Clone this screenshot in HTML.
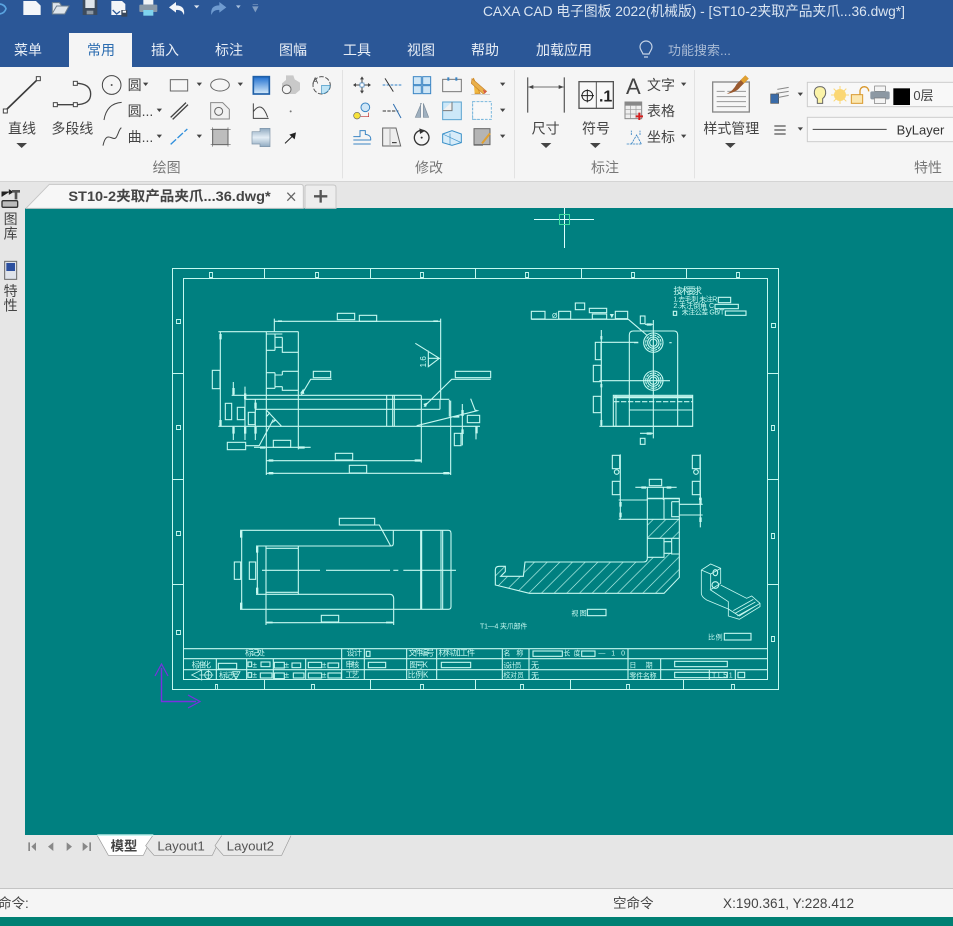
<!DOCTYPE html>
<html lang="zh"><head><meta charset="utf-8"><title>CAXA CAD 电子图板 2022</title>
<style>
html,body{margin:0;padding:0;width:953px;height:926px;overflow:hidden;background:#e6e6e6}
svg{display:block;position:absolute;left:0;top:0}
text{font-family:"Liberation Sans","Noto Sans CJK SC",sans-serif}
.d{fill:none;stroke:#c6f8f0;stroke-width:3.300}
.f{fill:#c6f8f0;stroke:none}
.t{fill:#c6f8f0;font-size:21px}
.k{fill:#444;font-size:42px}
.g{fill:#777;font-size:42px}
.tri{fill:#444}
.ic{fill:none;stroke:#444;stroke-width:3}
</style></head><body>
<svg width="953" height="926" viewBox="0 0 953 926" xmlns="http://www.w3.org/2000/svg">
<defs>
<pattern id="h" patternUnits="userSpaceOnUse" width="38" height="38"><path d="M-2 40L40 -2M-2 2L2 -2M36 40L40 36" stroke="#bdf5ec" stroke-width="2"/></pattern>
<linearGradient id="bl" x1="0" y1="0" x2="0" y2="1"><stop offset="0" stop-color="#1f6fd0"/><stop offset="1" stop-color="#d8ecfb"/></linearGradient>
<linearGradient id="cy" x1="0" y1="0" x2="0" y2="1"><stop offset="0" stop-color="#8fa9c0"/><stop offset=".5" stop-color="#e4eef6"/><stop offset="1" stop-color="#8fa9c0"/></linearGradient>
</defs>
<!-- base regions -->
<rect width="953" height="926" fill="#e6e6e6"/>
<rect width="953" height="67" fill="#2b5797"/>
<rect y="67" width="953" height="114" fill="#f5f5f5"/>
<rect y="181" width="953" height="1" fill="#d4d4d4"/>
<rect x="25" y="208" width="928" height="627" fill="#008080"/>
<rect y="888" width="953" height="1" fill="#c4c4c4"/>
<rect y="889" width="953" height="28" fill="#f5f5f5"/>
<rect y="917" width="953" height="9" fill="#008073"/>
<rect x="69" y="33" width="63" height="34" fill="#f5f5f5"/>

<!-- title + tabs -->
<text x="483" y="16" font-size="14" fill="#dbe5f1" textLength="422" lengthAdjust="spacingAndGlyphs">CAXA CAD 电子图板 2022(机械版) - [ST10-2夹取产品夹爪...36.dwg*]</text>
<g font-size="14" fill="#e8eef6">
<text x="14" y="55">菜单</text><text x="87" y="55" fill="#2b6cb0">常用</text><text x="151" y="55">插入</text><text x="215" y="55">标注</text><text x="279" y="55">图幅</text><text x="343" y="55">工具</text><text x="407" y="55">视图</text><text x="471" y="55">帮助</text><text x="536" y="55">加载应用</text>
<text x="668" y="55" font-size="13" fill="#a9bbd5">功能搜索...</text></g>
<g fill="none" stroke="#c5d3e6" stroke-width="1.200"><path d="M643 54c-1-3-3-4-3-7a6 6 0 0 1 12 0c0 3-2 4-3 7zM644 57h4"/></g>

<!-- quick access toolbar -->
<g transform="scale(.33333)">
<path d="M0 12q14 2 18 14q-4 14-20 16" fill="none" stroke="#5aa4e0" stroke-width="5"/>
<path d="M70 3H108L122 17V45H70Z" fill="#f4f6f9"/>
<path d="M157 40L170 18H207L194 42H157ZM157 40V8H178L184 16" fill="#dfe6ec" stroke="#6e7f8e" stroke-width="3"/>
<path d="M248 0H292V45H248Z" fill="#3d4b5c"/><rect x="256" y="0" width="28" height="24" fill="#dfe5ea"/><rect x="260" y="32" width="20" height="11" fill="#8e99a4"/>
<path d="M334 3H366L376 12V45H334Z" fill="#f3f5f8"/><path d="M338 30L350 42L360 34" stroke="#2b5797" stroke-width="4" fill="none"/><rect x="364" y="30" width="18" height="20" fill="#39475a"/><rect x="368" y="32" width="10" height="6" fill="#fff"/>
<rect x="430" y="0" width="30" height="14" fill="#f2f4f7"/><rect x="418" y="14" width="54" height="22" rx="3" fill="#8a99a8"/><rect x="430" y="30" width="30" height="17" fill="#7fd3ee"/>
<path d="M507 22L528 6V16Q556 16 552 45Q546 28 528 30V38Z" fill="#f2f5f9"/>
<path d="M679 22L658 6V16Q630 16 634 45Q640 28 658 30V38Z" fill="#6f9bd0"/>
<path d="M582 16H598L590 25Z" fill="#dfe6ee"/><path d="M708 16H722L715 25Z" fill="#a9c0dd"/>
<path d="M758 13H774M758 20H774L766 35Z" fill="#7f9cc2" stroke="#7f9cc2" stroke-width="2"/>
</g>

<!-- ribbon left -->
<g transform="scale(.33333)">
<path d="M15 333L115 236" stroke="#3a3a3a" stroke-width="5" fill="none"/>
<rect x="10" y="327" width="12" height="12" fill="#fff" stroke="#444" stroke-width="3"/><rect x="109" y="230" width="12" height="12" fill="#fff" stroke="#444" stroke-width="3"/>
<text class="k" x="24" y="400">直线</text><path class="tri" d="M49 429H81L65 444Z"/>
<path d="M166 314H226M226 250Q272 250 272 282Q272 314 226 314" fill="none" stroke="#444" stroke-width="4"/>
<g fill="#fff" stroke="#444" stroke-width="3"><rect x="220" y="244" width="12" height="12"/><rect x="160" y="308" width="12" height="12"/><rect x="220" y="308" width="12" height="12"/></g>
<text class="k" x="154" y="400">多段线</text>
<circle class="ic" cx="335" cy="255" r="28" stroke="#666"/><circle cx="335" cy="255" r="3" fill="#555"/>
<text class="k" x="383" y="270">圆</text><path class="tri" d="M429 248H445L437 258Z"/>
<path class="ic" d="M312 360Q320 310 365 307"/><text class="k" x="383" y="348">圆...</text><path class="tri" d="M470 326H486L478 336Z"/>
<path class="ic" d="M309 437C320 385 340 430 350 410S355 392 364 383"/><text class="k" x="383" y="426">曲...</text><path class="tri" d="M470 404H486L478 414Z"/>
<rect x="511" y="239" width="52" height="34" fill="none" stroke="#666" stroke-width="3"/><path class="tri" d="M590 248H606L598 258Z"/>
<ellipse cx="660" cy="255" rx="28" ry="18" fill="none" stroke="#666" stroke-width="3"/><path class="tri" d="M713 248H729L721 258Z"/>
<rect x="760" y="230" width="48" height="52" fill="url(#bl)" stroke="#1f5fa8" stroke-width="5"/>
<path d="M858 226H880L884 238L900 248V270L886 282H860L846 272V250L858 240Z" fill="#c9c9c9"/><circle cx="860" cy="268" r="13" fill="#f4f4f4" stroke="#666" stroke-width="3"/>
<circle cx="965" cy="256" r="26" fill="none" stroke="#555" stroke-width="3" stroke-dasharray="14 5"/><path d="M965 256H990A25 25 0 0 1 965 281Z" fill="#bfe4f5" stroke="#3a8fc0" stroke-width="2"/><text x="937" y="250" font-size="26" fill="#444">A</text>
<path d="M512 352L558 308M518 358L564 314" stroke="#444" stroke-width="4" fill="none"/>
<path d="M632 308H668L688 328V357H632Z" fill="#f0f0f0" stroke="#888" stroke-width="3"/><circle cx="656" cy="334" r="12" fill="none" stroke="#666" stroke-width="3"/>
<path class="ic" d="M760 310V355H806M760 335Q785 300 803 352"/>
<circle cx="872" cy="334" r="3" fill="#777"/>
<path d="M512 433L562 387" stroke="#2f8fdc" stroke-width="4" fill="none" stroke-dasharray="22 6"/><path class="tri" d="M590 404H606L598 414Z"/>
<rect x="638" y="388" width="46" height="46" fill="#bdbdbd" stroke="#666" stroke-width="3"/><path d="M632 388H692M632 434H692M638 382V440M684 382V440" stroke="#666" stroke-width="2"/>
<path d="M756 395H780V385H810V440H780V432H756Z" fill="url(#cy)" stroke="#7d93a6" stroke-width="2"/>
<path d="M855 430L878 408" stroke="#222" stroke-width="3"/><path d="M888 397L884 418L868 404Z" fill="#222"/>
<text class="g" x="458" y="518">绘图</text><text class="g" x="1245" y="518">修改</text>
<rect x="1027" y="210" width="2" height="325" fill="#d8d8d8"/>
<!-- modify -->
<path d="M1062 255H1110M1086 232V278" stroke="#444" stroke-width="3"/><rect x="1080" y="249" width="12" height="12" fill="#fff" stroke="#3a80c0" stroke-width="2"/><path class="tri" d="M1086 229L1080 238H1092ZM1086 281L1080 272H1092ZM1059 255L1068 249V261ZM1113 255L1104 249V261Z"/>
<path d="M1148 255H1205" stroke="#2f7fc8" stroke-width="3" stroke-dasharray="8 4"/><path d="M1155 235L1180 275" stroke="#333" stroke-width="3"/>
<g fill="#cfe6f6" stroke="#3a85c4" stroke-width="3"><rect x="1240" y="230" width="24" height="24"/><rect x="1268" y="230" width="24" height="24"/><rect x="1240" y="257" width="24" height="24"/><rect x="1268" y="257" width="24" height="24"/></g>
<rect x="1328" y="238" width="56" height="37" fill="none" stroke="#777" stroke-width="3"/><rect x="1342" y="232" width="6" height="10" fill="#3a85c4"/><rect x="1366" y="232" width="6" height="10" fill="#3a85c4"/>
<path d="M1420 234L1440 280H1424" fill="#f0b840" stroke="#d69020" stroke-width="3"/>
<circle cx="1071" cy="347" r="10" fill="#f7e23a" stroke="#666" stroke-width="2"/><circle cx="1096" cy="322" r="13" fill="#cfe6f6" stroke="#3a85c4" stroke-width="3"/><path d="M1082 350H1106V338" fill="none" stroke="#c03030" stroke-width="2"/>
<path d="M1148 333H1195" stroke="#333" stroke-width="3" stroke-dasharray="10 4"/><path d="M1180 312L1203 354" stroke="#2f6fb0" stroke-width="3"/>
<path d="M1264 310L1246 352H1262V310ZM1270 310L1286 352H1270Z" fill="#9fb0bf" stroke="#7d8d9c" stroke-width="2"/>
<rect x="1328" y="306" width="56" height="53" fill="#cde8f8" stroke="#5aa3d0" stroke-width="3"/><path d="M1328 332H1356V306" stroke="#777" stroke-width="3" fill="#f1f1f1"/>
<rect x="1418" y="306" width="30" height="52" fill="none" stroke="#5aa3d0" stroke-width="3" stroke-dasharray="6 4"/>
<path d="M1060 420H1112Q1114 405 1096 403V392H1080V410H1060M1060 432H1112" fill="none" stroke="#3a85c4" stroke-width="3"/>
<path d="M1148 384H1188L1202 438H1148Z" fill="#eee" stroke="#666" stroke-width="3"/><path d="M1170 384V438" stroke="#aaa" stroke-width="3"/><path d="M1176 428H1190" stroke="#222" stroke-width="3"/>
<circle cx="1265" cy="413" r="22" fill="none" stroke="#333" stroke-width="4"/><circle cx="1265" cy="413" r="3" fill="#333"/><path d="M1258 385L1276 392L1260 402Z" fill="#333"/>
<path d="M1328 402L1356 392L1384 402V428L1356 436L1328 428Z" fill="#d7ecf9" stroke="#3a90c8" stroke-width="3"/><path d="M1350 400V434M1328 402L1384 428" stroke="#3a90c8" stroke-width="2"/>
<rect x="1422" y="388" width="26" height="48" fill="#bbb" stroke="#666" stroke-width="2"/>
</g>

<!-- ribbon right -->
<g transform="translate(470 0) scale(.33333)">
<path d="M6 236L50 274L40 282L4 250Z" fill="#e9b04a" stroke="#c9822a" stroke-width="2"/><path d="M38 268L50 274L44 282Z" fill="#d65a4a"/><path d="M4 283H60" stroke="#bbb" stroke-width="2"/>
<path class="tri" d="M90 248H106L98 258Z"/>
<rect x="8" y="305" width="56" height="53" fill="#f8f8f8" stroke="#7ab8dd" stroke-width="3" stroke-dasharray="8 4"/><path class="tri" d="M90 326H106L98 336Z"/>
<rect x="12" y="386" width="48" height="48" fill="#b4b4b4" stroke="#666" stroke-width="3"/><path d="M36 430L60 400" stroke="#e0a030" stroke-width="6"/><path class="tri" d="M90 404H106L98 414Z"/>
<rect x="133" y="210" width="2" height="325" fill="#d8d8d8"/>
<rect x="673" y="210" width="2" height="325" fill="#d8d8d8"/>
<path d="M173 232V338M283 232V338" stroke="#666" stroke-width="4"/><path d="M175 261H281" stroke="#444" stroke-width="2"/><path class="tri" d="M175 261L190 255V267ZM281 261L266 255V267Z"/>
<text class="k" x="185" y="400">尺寸</text><path class="tri" d="M212 429H244L228 444Z"/>
<rect x="327" y="245" width="103" height="80" fill="#f8f8f8" stroke="#555" stroke-width="4"/><path d="M379 245V325" stroke="#555" stroke-width="3"/>
<circle cx="352" cy="287" r="16" fill="none" stroke="#222" stroke-width="3"/><path d="M333 287H372M352 268V307" stroke="#222" stroke-width="3"/>
<text x="387" y="305" font-size="48" font-weight="700" fill="#222">.1</text>
<text class="k" x="336" y="400">符号</text><path class="tri" d="M360 429H392L376 444Z"/>
<text x="468" y="282" font-size="66" fill="#444">A</text>
<text class="k" x="531" y="270">文字</text><path class="tri" d="M633 248H649L641 258Z"/>
<rect x="465" y="306" width="50" height="50" fill="#eee" stroke="#888" stroke-width="3"/><rect x="465" y="306" width="50" height="11" fill="#888"/><path d="M465 329H515M465 342H515M482 317V356M498 317V356" stroke="#999" stroke-width="2"/><path d="M508 338V360M497 349H519" stroke="#d32020" stroke-width="6"/>
<text class="k" x="531" y="348">表格</text>
<path d="M470 432H516M484 432L500 405L514 432M484 405V392M510 405V392" fill="none" stroke="#3a85c4" stroke-width="2.500" stroke-dasharray="7 2"/>
<text class="k" x="531" y="426">坐标</text><path class="tri" d="M633 404H649L641 414Z"/>
<text class="g" x="363" y="518">标注</text><text class="g" x="1332" y="518">特性</text>
<rect x="728" y="246" width="110" height="90" fill="#f6f6f6" stroke="#888" stroke-width="4"/>
<path d="M740 274H764M740 290H828M740 305H828M740 320H828M772 274H828" stroke="#999" stroke-width="3"/>
<path d="M770 282Q790 272 800 252L826 226L836 236L810 262Q800 276 770 282Z" fill="#9a5a30"/><path d="M812 240L826 226L836 236L822 250Z" fill="#e0a030"/>
<text class="k" x="700" y="400">样式管理</text><path class="tri" d="M765 429H797L781 444Z"/>
<rect x="902" y="282" width="24" height="28" fill="#3a6ba8" stroke="#555" stroke-width="2"/><path d="M922 268L956 262M918 280L956 274M926 292L956 286" stroke="#888" stroke-width="3"/>
<path class="tri" d="M983 278H999L991 288Z"/><path d="M913 378H947M913 390H947M913 402H947" stroke="#555" stroke-width="4"/><path class="tri" d="M983 382H999L991 392Z"/>
<rect x="1012" y="247" width="440" height="73" fill="#f8f8f8" stroke="#ccc" stroke-width="3"/>
<rect x="1012" y="352" width="440" height="73" fill="#f8f8f8" stroke="#ccc" stroke-width="3"/>
<path d="M1050 260C1030 260 1028 284 1042 296V310H1058V296C1072 284 1070 260 1050 260Z" fill="#fbf3a8" stroke="#666" stroke-width="3"/>
<circle cx="1110" cy="285" r="18" fill="#fbd774"/><path d="M1110 258V312M1083 285H1137M1091 266L1129 304M1129 266L1091 304" stroke="#fbd774" stroke-width="3"/>
<rect x="1144" y="284" width="34" height="26" fill="#fbe7b0" stroke="#d9992e" stroke-width="3"/><path d="M1170 284V272Q1172 260 1184 260Q1196 262 1196 274" fill="none" stroke="#d9992e" stroke-width="4"/>
<rect x="1214" y="258" width="32" height="16" fill="#f4f4f4" stroke="#777" stroke-width="2"/><rect x="1201" y="274" width="58" height="24" rx="5" fill="#8c98a3"/><rect x="1213" y="294" width="34" height="16" fill="#f4f4f4" stroke="#777" stroke-width="2"/>
<rect x="1270" y="265" width="50" height="50" fill="#000"/>
<text x="1330" y="300" fill="#444" style="font-size:39px">0层</text>
<path d="M1028 388H1250" stroke="#444" stroke-width="3"/>
<text x="1280" y="404" font-size="39" fill="#333">ByLayer</text>
</g>

<!-- document tabs -->
<g transform="scale(.33333)">
<path d="M78 625L148 553H902Q910 553 910 561V625Z" fill="#f7f7f7" stroke="#c6c6c6" stroke-width="3"/>
<path d="M915 625V561Q915 555 922 555H1000Q1008 555 1008 563V625Z" fill="#ededed" stroke="#c6c6c6" stroke-width="3"/>
<text x="205" y="603" font-size="42" font-weight="700" fill="#444" textLength="607" lengthAdjust="spacingAndGlyphs">ST10-2夹取产品夹爪...36.dwg*</text>
<path d="M862 578L885 602M885 578L862 602" stroke="#666" stroke-width="4"/>
<path d="M962 570V608M942 589H982" stroke="#555" stroke-width="7"/>
</g>

<!-- left sidebar -->
<g transform="translate(0 180) scale(.33333)">
<path d="M6 50V36H28M28 30L38 36L28 42Z" fill="#222" stroke="#222" stroke-width="3"/>
<path d="M36 30H60V38H52V58H44V38H36Z" fill="#555"/>
<rect x="6" y="62" width="47" height="20" rx="4" fill="#bbb" stroke="#333" stroke-width="4"/>
<rect x="14" y="244" width="36" height="54" fill="#dfe3ea" stroke="#666" stroke-width="3"/><rect x="19" y="249" width="26" height="24" fill="#2c4f9e"/>
<text x="11" y="132" font-size="42" fill="#444">图</text><text x="11" y="176" font-size="42" fill="#444">库</text>
<text x="11" y="348" font-size="42" fill="#444">特</text><text x="11" y="392" font-size="42" fill="#444">性</text>
</g>

<!-- crosshair + UCS -->
<path d="M534 219.500H594M564.500 208V248" stroke="#dff" stroke-width="1" fill="none"/>
<rect x="559.500" y="214.500" width="10" height="10" fill="none" stroke="#3fe0a0"/>
<path d="M161.500 668V701.500H196" stroke="#7a30e0" stroke-width="1.400" fill="none"/>
<path d="M155 676L161.500 664L168 676M188 695L200 701.500L188 708" stroke="#7a30e0" stroke-width="1.200" fill="none"/>

<!-- frame -->
<g fill="none" stroke="#c6f8f0" stroke-width="1">
<rect x="172.500" y="268.500" width="606" height="421"/>
<rect x="183.500" y="278.500" width="584" height="401"/>
<path d="M264.500 268V278M370.500 268V278M475.500 268V278M581.500 268V278M686.500 268V278M173 373.500H183M173 479.500H183M173 584.500H183M768 373.500H778M768 479.500H778M768 584.500H778M264.500 680V690M370.500 680V690M475.500 680V690M570.500 680V690M683.500 680V690"/>
<path stroke-width=".9" d="M209.500 272.500h3v5h-3zM315.500 272.500h3v5h-3zM420.500 272.500h3v5h-3zM525.500 272.500h3v5h-3zM631.500 272.500h3v5h-3zM736.500 272.500h3v5h-3zM176.500 319.500h4v4h-4zM176.500 425.500h4v4h-4zM176.500 531.500h4v4h-4zM176.500 630.500h4v4h-4zM771.500 323.500h4v4h-4zM771.500 425.500h3v5h-3zM771.500 533.500h3v5h-3zM771.500 636.500h3v5h-3zM215.500 684.500h2v5h-2zM311.500 684.500h3v5h-3zM420.500 684.500h3v5h-3zM520.500 684.500h3v5h-3zM626.500 684.500h3v5h-3zM731.500 684.500h3v5h-3z"/>
</g>

<!-- front view -->
<g transform="translate(160 260) scale(.33333)">
<path class="d" d="M343 176V215M343 184H842M842 176V420M175 215H415M181 215V499M175 499H960M319 215V645M415 215V568M319 222H367M319 271H345M345 232H367M367 232V277H415M345 262H367M319 338H345M367 334H415M367 334V345M345 345H367M345 380H367M367 380V391H415M319 385H345M345 338V385M345 222V271M215 406H784M784 406V608M255 418H868M286 448H840M840 420V448M868 420V470M872 422V645M680 406V499M698 406V499M703 406V499M220 366V406M220 499V540M255 380V540M286 418V540M319 450L365 499M297 558L340 478M257 557H297M282 562H452M319 602H784M319 640H872M766 250L838 295H805M805 272V320L838 295M792 440L875 358H992M424 405L452 358H515M770 497L952 452L945 450L932 416M907 432V556M948 500V538M330 458L319 470"/>
<g class="d"><rect x="532" y="160" width="52" height="19"/><rect x="598" y="166" width="52" height="18"/><rect x="157" y="331" width="23" height="55"/><rect x="196" y="430" width="19" height="49"/><rect x="232" y="442" width="22" height="37"/><rect x="265" y="457" width="20" height="37"/><rect x="202" y="547" width="55" height="22"/><rect x="340" y="541" width="52" height="21"/><rect x="526" y="580" width="52" height="20"/><rect x="568" y="616" width="52" height="23"/><rect x="886" y="334" width="106" height="19"/><rect x="460" y="334" width="52" height="19"/><rect x="922" y="466" width="37" height="22"/><rect x="883" y="520" width="20" height="37"/></g>
<path class="f" d="M178 222h7v16h-7zM178 480h7v18h-7zM217 384h7v20h-7zM217 501h7v20h-7zM252 400h7v18h-7zM252 501h7v20h-7zM283 428h7v18h-7zM283 501h7v20h-7zM354 181h12v5h-12zM820 181h14v5h-14zM300 559h16v7h-16zM416 559h18v7h-18zM326 598h14v7h-14zM764 598h18v7h-18zM326 636h14v7h-14zM850 636h18v7h-18zM904 450h7v18h-7zM904 508h7v14h-7zM946 500h7v20h-7zM880 468h18v5h-18zM790 432l12 -4l-4 14zM420 400l10 -14l3 16zM335 490l10 -14l3 6z"/>
<text class="t" transform="translate(798 322) rotate(-90)" style="font-size:24px">1.6</text>
</g>

<!-- right top view -->
<g transform="translate(480 260) scale(.33333)">
<path class="d" d="M154 178H445L500 225M495 193H520M520 180V535M480 520H520M448 406V225Q448 213 460 213H582Q593 213 593 225V406M462 248H475M568 248H575M358 362H570M364 210V499M364 247H475M358 499H638M408 406V499M402 410H638M402 413H638M448 450H638M448 406V499M593 406V499M421 583V720M661 583V720M466 682H590M502 682V720M550 682V720M502 716H598"/>
<path class="d" d="M402 425H638" stroke-dasharray="16 5"/>
<g class="d"><rect x="154" y="154" width="41" height="23"/><rect x="236" y="154" width="36" height="23"/><rect x="286" y="129" width="28" height="20"/><rect x="328" y="145" width="52" height="13"/><rect x="337" y="162" width="43" height="15"/><rect x="406" y="154" width="37" height="22"/><rect x="481" y="168" width="14" height="23"/><rect x="481" y="535" width="14" height="18"/><rect x="346" y="247" width="17" height="52"/><rect x="340" y="316" width="23" height="49"/><rect x="340" y="409" width="23" height="49"/><rect x="400" y="406" width="238" height="93"/>
<circle cx="520" cy="248" r="29"/><circle cx="520" cy="248" r="23" stroke-dasharray="9 3"/><circle cx="520" cy="248" r="17"/><circle cx="520" cy="248" r="11"/>
<circle cx="520" cy="362" r="29"/><circle cx="520" cy="362" r="23" stroke-dasharray="9 3"/><circle cx="520" cy="362" r="17"/><circle cx="520" cy="362" r="11"/>
<rect x="397" y="586" width="22" height="40"/><rect x="637" y="586" width="23" height="40"/><rect x="397" y="664" width="23" height="40"/><rect x="637" y="664" width="23" height="40"/><circle cx="410" cy="636" r="7"/><circle cx="648" cy="636" r="7"/><rect x="508" y="658" width="37" height="19"/>
<rect x="715" y="112" width="37" height="16"/><rect x="705" y="133" width="70" height="13"/><rect x="736" y="153" width="62" height="13"/><rect x="580" y="154" width="10" height="12"/></g>
<path class="f" d="M361 228h6v10h-6zM361 372h6v10h-6zM361 480h6v16h-6zM500 190h15v7h-15zM500 517h15v7h-15zM484 679h14v7h-14zM560 679h14v7h-14zM657 713h8v7h-8z"/>
<text x="580" y="102" fill="#c6f8f0" style="font-size:27px" textLength="86">技术要求</text>
<text x="580" y="124" class="t" textLength="132">1.去毛刺 未注R</text>
<text x="580" y="144" class="t" textLength="122">2.未注倒角 C</text>
<text x="605" y="163" class="t" textLength="128">未注公差 GB/T</text>
<text x="216" y="174" class="t">Ø</text><text x="385" y="174" class="t">▼</text>
</g>

<!-- section view -->
<g transform="translate(480 490) scale(.33333)">
<path d="M46 285V240Q46 229 58 229H76V245L62 259H130L135 216H490Q502 216 502 205V88H598V262L552 310H148Z" fill="url(#h)"/>
<rect x="503" y="146" width="49" height="56" fill="#008080"/>
<rect x="552" y="146" width="46" height="44" fill="#008080"/>
<path class="d" d="M502 25V205Q502 216 490 216H135L130 259H62L76 245V229H58Q46 229 46 240V285L148 310H552L598 262V25H502M502 88H598M502 145H598M552 25V88M552 145V202H502M552 155H575M575 35H598M575 35V80H598M575 145V192H598M552 190H575M575 145V192M416 30H502M416 88H502M421 30V88M598 43H668M598 75H668M661 0V112"/>
<path class="f" d="M418 36h7v14h-7zM418 68h7v14h-7zM658 26h7v16h-7zM658 82h7v14h-7z"/>
<path class="d" style="stroke-width:2.500" d="M664 240L692 222L722 235V280M664 240V310Q664 320 680 330L745 357V378L778 388L840 350V340L815 318L800 325L722 285M664 240L692 252L722 235M692 252V300L745 335V357M745 357L778 378L840 340M760 362L820 328M765 370L826 336M772 378L834 344M690 300L722 280"/>
<ellipse class="d" cx="706" cy="248" rx="7" ry="9"/><ellipse class="d" cx="706" cy="285" rx="10" ry="10"/>
<rect class="d" x="322" y="358" width="56" height="19"/><rect class="d" x="733" y="430" width="80" height="20"/>
<text class="t" x="274" y="376" textLength="46">视图</text><text class="t" x="684" y="448" textLength="44">比例</text>
<text class="t" x="0" y="416" textLength="142">T1—4 夹爪部件</text>
</g>

<!-- plan view + title block left -->
<g transform="translate(150 490) scale(.33333)">
<path class="d" d="M270 121H895Q903 121 903 130V350Q903 358 895 358H270M275 121V358M318 168H722Q730 168 730 160V121M318 313H720Q730 313 731 325V358M348 168V405M445 168V313M348 175H445M348 307H445M322 168V313M812 121V358M815 121V358M873 121V358M878 121V358M336 241H510M528 241H720M730 241H745M760 241H918M568 105H688L722 168M348 398H731M731 358V405"/>
<g class="d"><rect x="568" y="85" width="106" height="20"/><rect x="253" y="216" width="19" height="52"/><rect x="298" y="216" width="19" height="52"/><rect x="514" y="376" width="52" height="20"/></g>
<path class="f" d="M270 123h7v20h-7zM270 338h7v20h-7zM318 170h7v18h-7zM318 293h7v18h-7zM350 395h18v5h-18zM708 395h20v5h-20z"/>
<path class="d" d="M100 476H1852M100 506H1852M100 539H1852M199 506V570M290 506V570M370 506V570M467 506V570M575 476V570M643 476V570M770 476V570M860 476V570M1057 476V570M1137 476V570M1434 476V570M1532 506V570M1678 539V570M1756 539V570"/>
<g class="d"><rect x="205" y="520" width="55" height="17"/><rect x="294" y="516" width="11" height="14"/><rect x="333" y="516" width="27" height="14"/><rect x="373" y="517" width="30" height="17"/><rect x="426" y="519" width="26" height="14"/><rect x="475" y="517" width="40" height="16"/><rect x="534" y="519" width="32" height="14"/><rect x="294" y="548" width="11" height="14"/><rect x="331" y="549" width="35" height="15"/><rect x="373" y="549" width="30" height="17"/><rect x="430" y="549" width="32" height="15"/><rect x="475" y="549" width="40" height="15"/><rect x="534" y="549" width="40" height="15"/><rect x="649" y="484" width="11" height="15"/><rect x="655" y="517" width="52" height="16"/><rect x="874" y="517" width="88" height="16"/>
<rect x="1149" y="483" width="88" height="16"/><rect x="1295" y="483" width="40" height="16"/>
<rect x="1574" y="514" width="158" height="16"/><rect x="1574" y="547" width="158" height="16"/><rect x="1764" y="547" width="20" height="16"/></g>
<g class="t" style="font-size:24px">
<text x="285" y="497" textLength="60">标记处</text><text x="590" y="497" textLength="46">设 计</text>
<text x="125" y="532" textLength="58">标准化</text><text x="207" y="564" textLength="60">标记号</text>
<text x="308" y="532">±</text><text x="308" y="563">±</text><text x="404" y="532">±</text><text x="404" y="563">±</text><text x="516" y="532">±</text><text x="516" y="563">±</text>
<text x="586" y="532" textLength="42">审 核</text><text x="586" y="563" textLength="42">工 艺</text>
<text x="775" y="497" textLength="78">文件编号</text><text x="865" y="497" textLength="110">材料加工件</text>
<text x="778" y="532" textLength="56">图号K</text><text x="773" y="563" textLength="62">比例K</text>
<text x="1060" y="497" textLength="60" style="font-size:21px">名 称</text>
<text x="1060" y="532" textLength="55" style="font-size:21px">设计员</text><text x="1060" y="563" textLength="62" style="font-size:21px">校对员</text>
<text x="1143" y="534">无</text><text x="1143" y="565">无</text>
<text x="1240" y="497" textLength="52" style="font-size:21px">长度</text><text x="1345" y="497" textLength="80" style="font-size:21px">—10</text>
<text x="1438" y="532" textLength="70" style="font-size:21px">日 期</text><text x="1438" y="564" textLength="82" style="font-size:21px">零件名称</text>
<text x="1686" y="563" textLength="62" style="font-size:21px">TL51</text>
</g>
<g fill="none" stroke="#c6f8f0" stroke-width="2.500"><path d="M125 555L155 540V570ZM148 555H162"/><circle cx="175" cy="555" r="11"/><path d="M160 555H190M175 540V570"/><path d="M248 545H270L258 568Z"/></g>
</g>

<!-- bottom tabs -->
<g transform="translate(0 825) scale(.33333)">
<path d="M292 32L325 91H430L458 32Z" fill="#fff" stroke="#999" stroke-width="2"/>
<path d="M458 32L437 62L462 91H637L665 32" fill="#e9e9e9" stroke="#999" stroke-width="2"/>
<path d="M665 32L645 62L670 91H845L873 32" fill="#e9e9e9" stroke="#999" stroke-width="2"/>
<rect x="292" y="28" width="168" height="5" fill="#c8f4ef"/>
<text x="332" y="76" font-size="40" font-weight="700" fill="#444">模型</text>
<text x="472" y="76" font-size="40" fill="#555">Layout1</text>
<text x="680" y="76" font-size="40" fill="#555">Layout2</text>
<g fill="#888"><path d="M85 52h5v26h-5zM108 52L94 65L108 78ZM160 52L144 65L160 78ZM200 52L216 65L200 78ZM248 52L264 65L248 78ZM268 52h5v26h-5z"/></g>
</g>

<!-- status -->
<text x="-2" y="908" font-size="13.500" fill="#444">命令:</text>
<text x="613" y="908" font-size="13.500" fill="#444">空命令</text>
<text x="723" y="908" font-size="13.500" fill="#444" textLength="131">X:190.361, Y:228.412</text>
</svg>
</body></html>
